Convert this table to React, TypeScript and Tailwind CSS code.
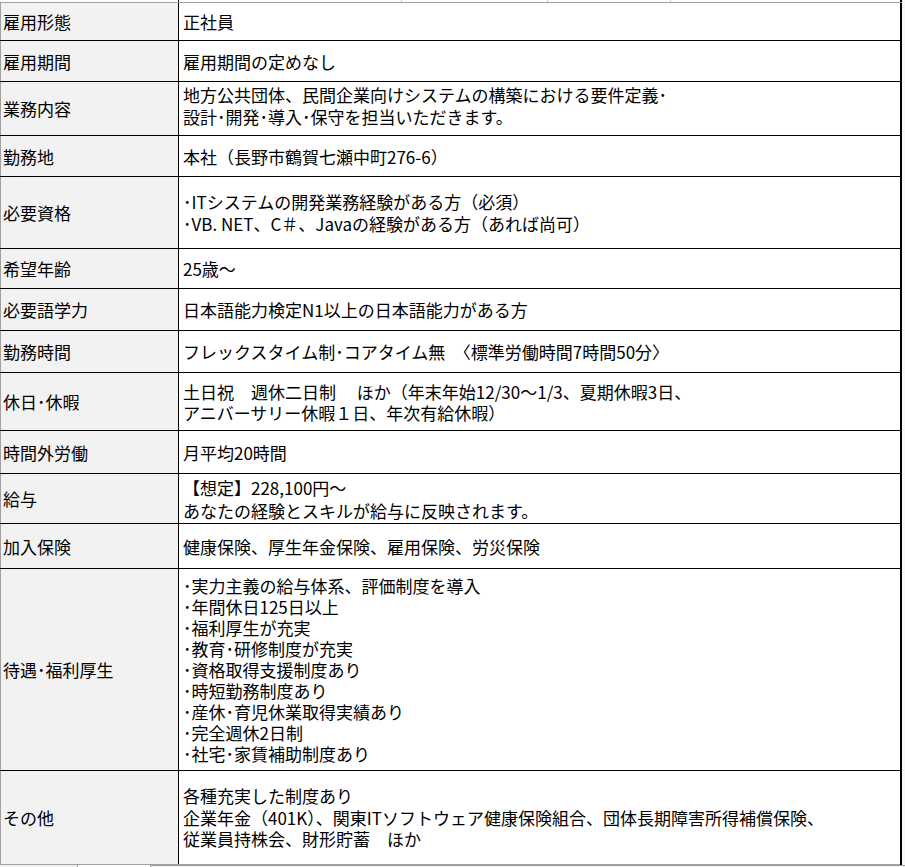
import React from 'react';

type Row = { label: string; h: string; lead: string; pad?: string; lines: string[] };

// narrow (half-width) middle dot, closer to the proportional gothic used in the sheet
const rows: Row[] = [
  { label: '雇用形態', h: 'h-[38px]', lead: 'leading-[21px]', lines: ['正社員'] },
  { label: '雇用期間', h: 'h-[41px]', lead: 'leading-[21px]', lines: ['雇用期間の定めなし'] },
  {
    label: '業務内容',
    h: 'h-[54px]',
    lead: 'leading-[22px]',
    pad: 'pb-[6px]',
    lines: ['地方公共団体、民間企業向けシステムの構築における要件定義･', '設計･開発･導入･保守を担当いただきます。'],
  },
  { label: '勤務地', h: 'h-[41px]', lead: 'leading-[21px]', lines: ['本社（長野市鶴賀七瀬中町276-6）'] },
  {
    label: '必要資格',
    h: 'h-[72px]',
    lead: 'leading-[22px]',
    lines: ['･ITシステムの開発業務経験がある方（必須）', '･VB. NET、C＃、Javaの経験がある方（あれば尚可）'],
  },
  { label: '希望年齢', h: 'h-[40px]', lead: 'leading-[21px]', lines: ['25歳～'] },
  { label: '必要語学力', h: 'h-[42px]', lead: 'leading-[21px]', lines: ['日本語能力検定N1以上の日本語能力がある方'] },
  { label: '勤務時間', h: 'h-[42px]', lead: 'leading-[21px]', lines: ['フレックスタイム制･コアタイム無　〈標準労働時間7時間50分〉'] },
  {
    label: '休日･休暇',
    h: 'h-[58px]',
    lead: 'leading-[21px]',
    lines: ['土日祝　週休二日制　 ほか（年末年始12/30～1/3、夏期休暇3日、', 'アニバーサリー休暇１日、年次有給休暇）'],
  },
  { label: '時間外労働', h: 'h-[43px]', lead: 'leading-[21px]', lines: ['月平均20時間'] },
  {
    label: '給与',
    h: 'h-[50px]',
    lead: 'leading-[23px]',
    lines: ['【想定】228,100円～', 'あなたの経験とスキルが給与に反映されます。'],
  },
  { label: '加入保険', h: 'h-[45px]', lead: 'leading-[21px]', lines: ['健康保険、厚生年金保険、雇用保険、労災保険'] },
  {
    label: '待遇･福利厚生',
    h: 'h-[202px]',
    lead: 'leading-[21px]',
    lines: [
      '･実力主義の給与体系、評価制度を導入',
      '･年間休日125日以上',
      '･福利厚生が充実',
      '･教育･研修制度が充実',
      '･資格取得支援制度あり',
      '･時短勤務制度あり',
      '･産休･育児休業取得実績あり',
      '･完全週休2日制',
      '･社宅･家賃補助制度あり',
    ],
  },
  {
    label: 'その他',
    h: 'h-[94px]',
    lead: 'leading-[21.5px]',
    lines: [
      '各種充実した制度あり',
      '企業年金（401K）、関東ITソフトウェア健康保険組合、団体長期障害所得補償保険、',
      '従業員持株会、財形貯蓄　ほか',
    ],
  },
];

const SheetRow: React.FC<{ row: Row; last: boolean }> = ({ row, last }) => {
  return (
    <div
      className={`grid grid-cols-[179px_1fr] ${row.h} border-b ${last ? 'border-[#a0a0a0]' : 'border-black'}`}
    >
      <div className="flex items-center bg-[#f2f2f2] border-l border-[#a0a0a0] border-r border-r-black pl-[2px]">
        <span className="leading-[21px]">{row.label}</span>
      </div>
      <div className={`flex flex-col justify-center pl-[4px] ${row.lead} ${row.pad ?? ''}`}>
        {row.lines.map((line, idx) => (
          <span key={idx} className="whitespace-pre">
            {line}
          </span>
        ))}
      </div>
    </div>
  );
};

export default function App() {
  return (
    <div
      className="w-[905px] h-[867px] overflow-hidden bg-white text-black text-[17px]"
      style={{ fontFamily: '"Noto Sans CJK JP", "Noto Sans", sans-serif' }}
    >
      <div className="flex">
        <div className="w-[902px]">
          {/* top gridline strip */}
          <div className="grid grid-cols-[179px_223px_146px_123px_1fr] h-[3px] border-b border-[#a0a0a0]">
            <div className="border-r border-black" />
            <div className="border-r border-[#c8c8c8]" />
            <div className="border-r border-[#c8c8c8]" />
            <div className="border-r border-[#c8c8c8]" />
            <div className="border-r-2 border-black" />
          </div>
          <div className="border-r-2 border-black">
            {rows.map((row, idx) => (
              <SheetRow key={row.label} row={row} last={idx === rows.length - 1} />
            ))}
          </div>
        </div>
        <div className="flex-1 bg-[#f7f7f7]" />
      </div>
      {/* sheet tab strip */}
      <div className="grid grid-cols-[78px_72px_1fr] h-[2px]">
        <div className="bg-[#f0f0f0] border-r border-[#a0a0a0]" />
        <div className="bg-white" />
        <div className="bg-[#f0f0f0] border-l border-t border-[#a0a0a0]" />
      </div>
    </div>
  );
}
